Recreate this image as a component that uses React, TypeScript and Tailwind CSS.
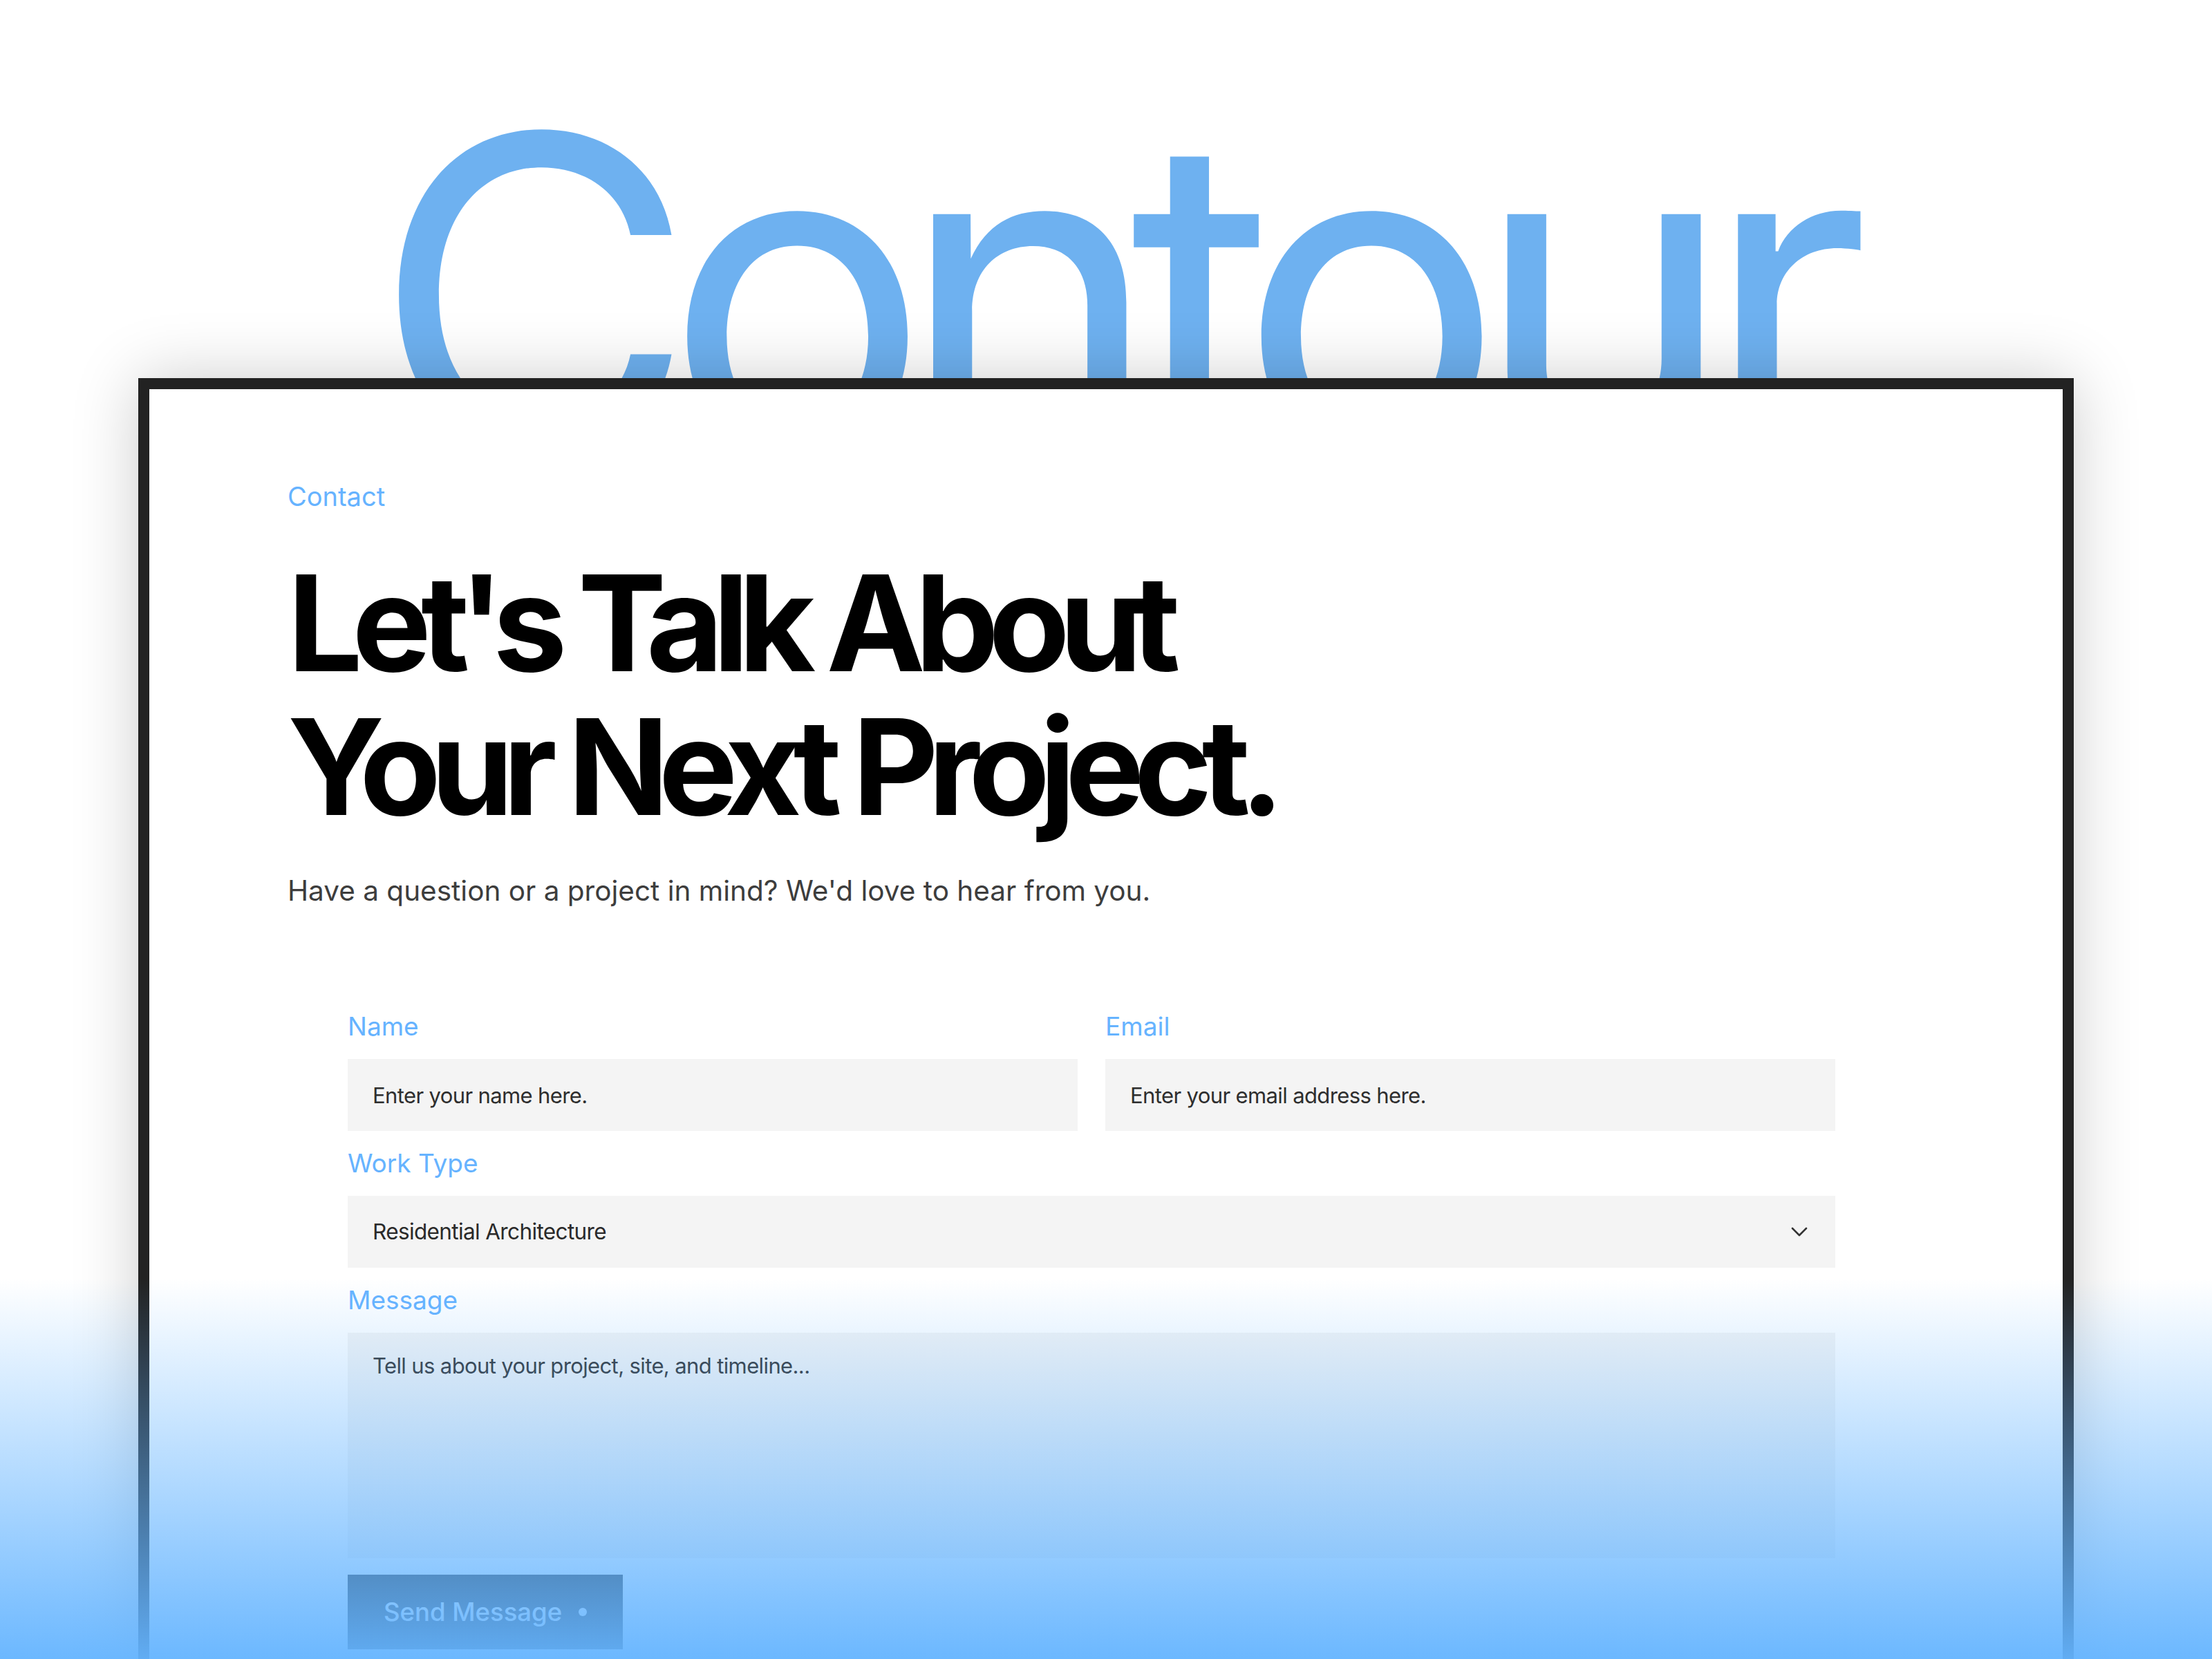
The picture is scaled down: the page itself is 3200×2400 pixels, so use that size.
export default function App() {
  return (
    <div className="relative h-[2400px] w-[3200px] overflow-hidden bg-white [font-family:Inter,'Noto_Sans',sans-serif]">
      {/* Oversized brand word, its lower part cut off by the card's top edge */}
      <h1 className="h-[547px] overflow-hidden pt-[106px] text-center text-[640px] font-normal leading-none tracking-[-0.07em] text-[#6eb1f0]">
        Contour
      </h1>

      {/* Framed contact card */}
      <div className="relative z-10 mx-[200px] h-[2000px] border-[16px] border-[#222222] bg-white shadow-[0_0_90px_rgba(0,0,0,0.2)]">
        <div className="px-[200px] pt-[128px]">
          <p className="text-[38px] leading-[54px] text-[#66b3ff]">Contact</p>
          <h2 className="mt-[52px] text-[192px] font-bold leading-[208px] tracking-[-0.078em] text-black">
            Let's Talk About
            <br />
            Your Next Project.
          </h2>
          <p className="mt-[46px] text-[40.5px] leading-[60px] text-[#3d3d3d]">
            Have a question or a project in mind? We'd love to hear from you.
          </p>

          <form className="ml-[87px] mt-[139px] w-[2152px]" onSubmit={(e) => e.preventDefault()}>
            <div className="grid grid-cols-2 gap-x-10 gap-y-5">
              <div className="flex flex-col gap-5">
                <label className="text-[37px] leading-[54px] text-[#66b3ff]">Name</label>
                <input
                  type="text"
                  placeholder="Enter your name here."
                  className="h-[104px] w-full bg-[#f4f4f4] px-9 text-[31px] tracking-[-0.02em] text-[#222] outline-none placeholder:text-[#2e2e2e]"
                />
              </div>
              <div className="flex flex-col gap-5">
                <label className="text-[37px] leading-[54px] text-[#66b3ff]">Email</label>
                <input
                  type="email"
                  placeholder="Enter your email address here."
                  className="h-[104px] w-full bg-[#f4f4f4] px-9 text-[31px] tracking-[-0.02em] text-[#222] outline-none placeholder:text-[#2e2e2e]"
                />
              </div>
              <div className="col-span-2 flex flex-col gap-5">
                <label className="text-[37px] leading-[54px] text-[#66b3ff]">Work Type</label>
                <div className="flex h-[104px] w-full items-center justify-between bg-[#f4f4f4] pl-9 pr-10 text-[31.5px] tracking-[-0.02em] text-[#2a2a2a]">
                  <span>Residential Architecture</span>
                  <svg width="24" height="14" viewBox="0 0 24 14" fill="none">
                    <polyline
                      points="2,2 12,12 22,2"
                      stroke="#333333"
                      strokeWidth="2.6"
                      strokeLinecap="round"
                      strokeLinejoin="round"
                    />
                  </svg>
                </div>
              </div>
              <div className="col-span-2 flex flex-col gap-5">
                <label className="text-[37px] leading-[54px] text-[#66b3ff]">Message</label>
                <textarea
                  placeholder="Tell us about your project, site, and timeline..."
                  className="h-[326px] w-full resize-none bg-[#f4f4f4] px-9 pt-7 text-[31px] leading-10 tracking-[-0.02em] text-[#222] outline-none placeholder:text-[#2e2e2e]"
                />
              </div>
            </div>
            <button
              type="submit"
              className="mt-6 flex h-[108px] w-[398px] items-center gap-6 bg-[#222222] pl-[52px] text-[36.5px] font-medium text-white"
            >
              <span>Send Message</span>
              <span className="h-3 w-3 rounded-full bg-white" />
            </button>
          </form>
        </div>
      </div>

      {/* Blue haze rising from the bottom edge */}
      <div className="pointer-events-none absolute inset-x-0 bottom-0 z-20 h-[550px] bg-linear-to-b from-[#64b4ff]/0 to-[#64b4ff]/95" />
    </div>
  );
}
